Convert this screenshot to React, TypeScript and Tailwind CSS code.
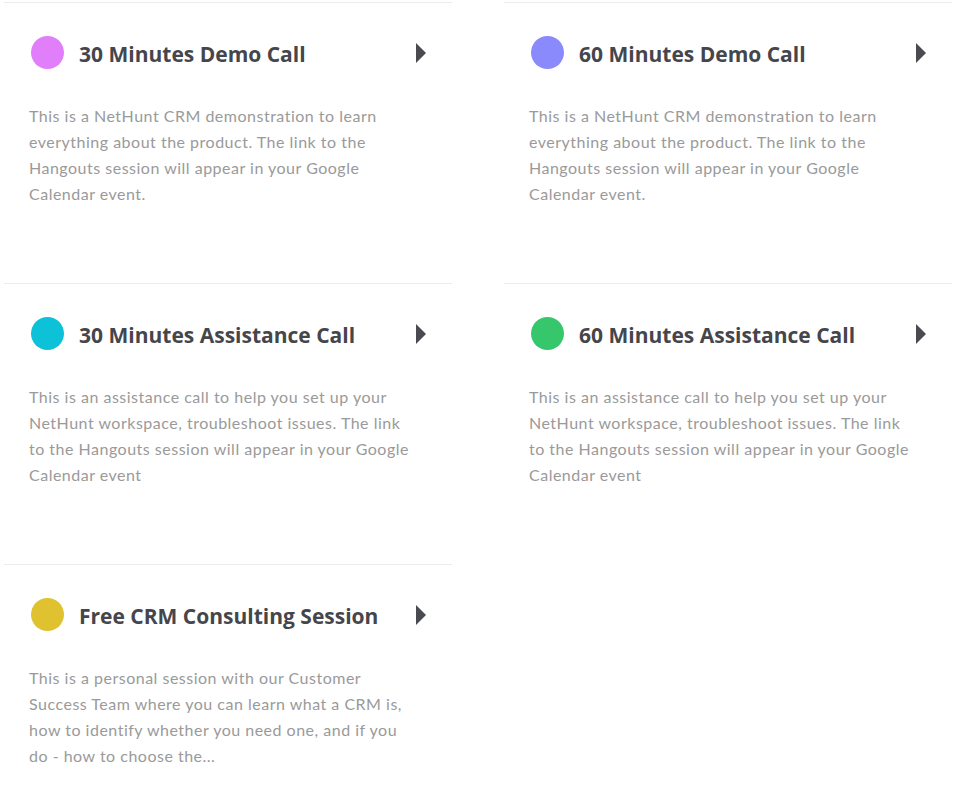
import React from "react";

type Item = { title: string; color: string; desc: string };

const items: Item[] = [
  {
    title: "30 Minutes Demo Call",
    color: "bg-[#e17ffa]",
    desc: "This is a NetHunt CRM demonstration to learn everything about the product. The link to the Hangouts session will appear in your Google Calendar event.",
  },
  {
    title: "60 Minutes Demo Call",
    color: "bg-[#8a8afc]",
    desc: "This is a NetHunt CRM demonstration to learn everything about the product. The link to the Hangouts session will appear in your Google Calendar event.",
  },
  {
    title: "30 Minutes Assistance Call",
    color: "bg-[#0dc1d9]",
    desc: "This is an assistance call to help you set up your NetHunt workspace, troubleshoot issues. The link to the Hangouts session will appear in your Google Calendar event",
  },
  {
    title: "60 Minutes Assistance Call",
    color: "bg-[#36c76d]",
    desc: "This is an assistance call to help you set up your NetHunt workspace, troubleshoot issues. The link to the Hangouts session will appear in your Google Calendar event",
  },
  {
    title: "Free CRM Consulting Session",
    color: "bg-[#e0c12f]",
    desc: "This is a personal session with our Customer Success Team where you can learn what a CRM is, how to identify whether you need one, and if you do - how to choose the...",
  },
];

function Card({ item }: { item: Item }) {
  return (
    <div className="h-[281px] border-t border-[#ececec]">
      <div className="flex h-[33px] items-center pl-[27px] pr-[26px] mt-[33px]">
        <div className={`h-[33px] w-[33px] shrink-0 rounded-full ${item.color}`} />
        <div className="ml-[15px] flex-1 pt-[5px] text-[21px] font-bold text-[#45464c] [font-family:'Open_Sans',sans-serif]">
          {item.title}
        </div>
        <svg width="10" height="20" viewBox="0 0 10 20" className="shrink-0">
          <polygon points="0,0 10,10 0,20" fill="#4a4b51" />
        </svg>
      </div>
      <p className="mt-[34px] ml-[25px] w-[390px] text-[16px] leading-[26px] tracking-[0.5px] text-[#9a9a9a] [font-family:'Lato',sans-serif]">
        {item.desc}
      </p>
    </div>
  );
}

export default function App() {
  return (
    <div className="min-h-[810px] w-[976px] bg-white pt-[2px] pl-[4px]">
      <div className="grid grid-cols-[448px_448px] gap-x-[52px]">
        {items.map((it) => (
          <Card key={it.title} item={it} />
        ))}
      </div>
    </div>
  );
}
